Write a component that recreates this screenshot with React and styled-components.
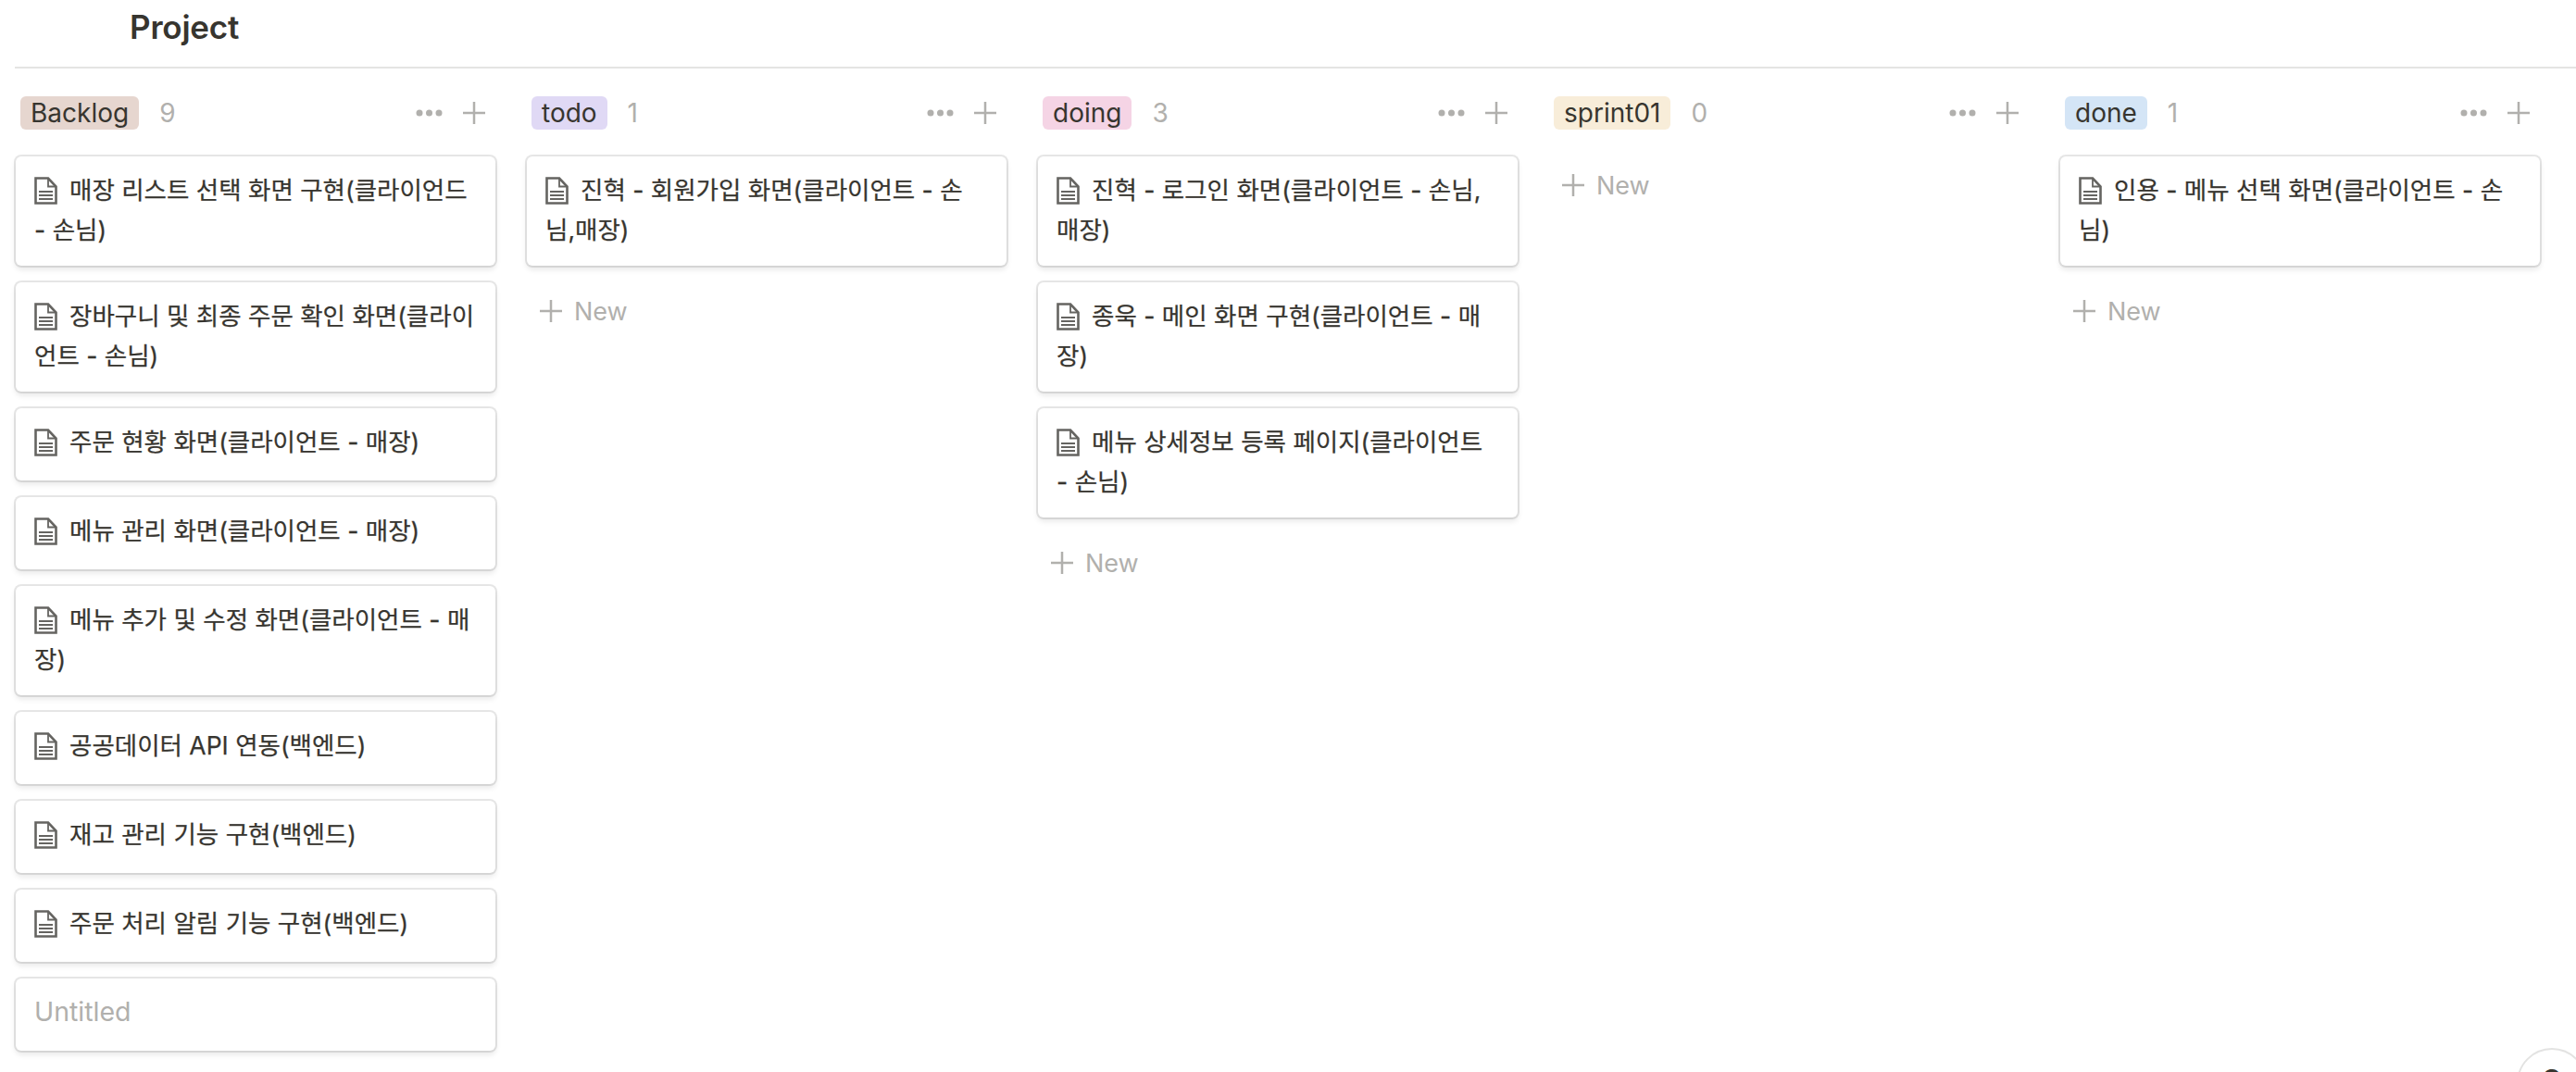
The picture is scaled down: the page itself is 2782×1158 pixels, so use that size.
import React from 'react'
import styled, { createGlobalStyle } from 'styled-components'

const GlobalStyle = createGlobalStyle`
    html, body {
        margin: 0;
        padding: 0;
        height: 100%;
        overflow: hidden;
        background: #fff;
    }
    body {
        font-family: Inter, "Noto Sans CJK KR", sans-serif;
        color: #37352f;
    }
`
const Page = styled.div`
    position: relative;
    width: 2782px;
    height: 1158px;
    overflow: hidden;
    background: #fff;
`
const TopBar = styled.div`
    height: 72px;
    margin-left: 16px;
    padding-left: 124px;
    border-bottom: 2px solid #e4e4e3;
    box-sizing: content-box;
`
const PageTitle = styled.h1`
    margin: 0;
    font-size: 35px;
    line-height: 58px;
    font-weight: 600;
    letter-spacing: -0.2px;
`
const Board = styled.div`
    display: flex;
    gap: 30px;
    padding: 30px 0 0 15px;
`
const Column = styled.div`
    width: 522px;
    flex: none;
    display: flex;
    flex-direction: column;
    gap: 18px;
`
const ColumnHeader = styled.div`
    height: 36px;
    margin-bottom: 11px;
    padding-left: 7px;
    display: flex;
    align-items: center;
    position: relative;
`
const Tag = styled.span`
    height: 36px;
    padding: 0 11px;
    border-radius: 6px;
    background: ${props => props.$color};
    font-size: 28px;
    line-height: 36px;
    white-space: nowrap;
`
const Count = styled.span`
    margin-left: 22px;
    font-size: 28px;
    color: #b1b0ad;
`
const HeaderActions = styled.div`
    margin-left: auto;
    width: 76px;
    margin-right: 12px;
    display: flex;
    justify-content: space-between;
    align-items: center;
`
const Card = styled.div`
    box-sizing: border-box;
    padding: 15px 19px 18px 20px;
    background: #fff;
    border-radius: 6px;
    box-shadow: 0 0 0 2px rgba(15, 15, 15, 0.1), 0 4px 6px rgba(15, 15, 15, 0.1);
    margin: 0 2px;
    font-size: 26.5px;
    line-height: 42.5px;
    font-weight: 400;
    -webkit-text-stroke: 0.25px #37352f;
    min-height: 78px;
`
const EmptyTitle = styled.span`
    color: #b1b0ad;
    font-size: 28.5px;
    -webkit-text-stroke: 0;
`
const DocIcon = styled.svg`
    width: 25px;
    height: 30px;
    vertical-align: -6px;
    margin-right: 13px;
`
const NewRow = styled.div`
    height: 62px;
    padding-left: 15px;
    display: flex;
    align-items: center;
    gap: 12px;
    font-size: 27px;
    color: #b1b0ad;
`

const columns = [
    {
        name: 'Backlog', color: '#e6d6cf', count: 9, untitled: true,
        cards: [
            '매장 리스트 선택 화면 구현(클라이언드 - 손님)',
            '장바구니 및 최종 주문 확인 화면(클라이언트 - 손님)',
            '주문 현황 화면(클라이언트 - 매장)',
            '메뉴 관리 화면(클라이언트 - 매장)',
            '메뉴 추가 및 수정 화면(클라이언트 - 매장)',
            '공공데이터 API 연동(백엔드)',
            '재고 관리 기능 구현(백엔드)',
            '주문 처리 알림 기능 구현(백엔드)',
        ],
    },
    { name: 'todo', color: '#e0d9f5', count: 1, cards: ['진혁 - 회원가입 화면(클라이언트 - 손님,매장)'] },
    {
        name: 'doing', color: '#f5d4e5', count: 3,
        cards: [
            '진혁 - 로그인 화면(클라이언트 - 손님,매장)',
            '종욱 - 메인 화면 구현(클라이언트 - 매장)',
            '메뉴 상세정보 등록 페이지(클라이언트 - 손님)',
        ],
    },
    { name: 'sprint01', color: '#f8edd9', count: 0, cards: [] },
    { name: 'done', color: '#d4e5f6', count: 1, cards: ['인용 - 메뉴 선택 화면(클라이언트 - 손님)'] },
]

function Doc() {
    return (
        <DocIcon viewBox="0 0 25 30" fill="none" stroke="#656461" strokeWidth="2.600">
            <path d="M1.500 1.500h13.500l8.500 9v18h-22z" />
            <path d="M15 2v8.500h8" strokeWidth="1.800" />
            <path d="M5 16h15M5 20h15M5 24h15" strokeWidth="1.800" />
        </DocIcon>
    )
}

function Plus({ color = '#b1b0ad' }) {
    return (
        <svg width="26" height="26" viewBox="0 0 26 26" stroke={color} strokeWidth="2.500">
            <path d="M13 1v24M1 13h24" />
        </svg>
    )
}

function Dots() {
    return (
        <svg width="29" height="8" viewBox="0 0 29 8" fill="#b1b0ad">
            <circle cx="4" cy="4" r="3.500" />
            <circle cx="14.500" cy="4" r="3.500" />
            <circle cx="25" cy="4" r="3.500" />
        </svg>
    )
}

const HelpButton = styled.div`
    position: absolute;
    left: 2718px;
    top: 1132px;
    width: 76px;
    height: 76px;
    box-sizing: border-box;
    border-radius: 50%;
    border: 2px solid #e3e3e2;
    background: #fff;
    text-align: center;
    font-size: 36px;
    line-height: 68px;
    font-weight: 600;
`

function App() {
    return (
        <Page>
            <GlobalStyle />
            <TopBar>
                <PageTitle>Project</PageTitle>
            </TopBar>
            <Board>
                {columns.map((col) => (
                    <Column key={col.name}>
                        <ColumnHeader>
                            <Tag $color={col.color}>{col.name}</Tag>
                            <Count>{col.count}</Count>
                            <HeaderActions>
                                <Dots />
                                <Plus />
                            </HeaderActions>
                        </ColumnHeader>
                        {col.cards.map((title) => (
                            <Card key={title}>
                                <Doc />
                                {title}
                            </Card>
                        ))}
                        {col.untitled ? (
                            <Card>
                                <EmptyTitle>Untitled</EmptyTitle>
                            </Card>
                        ) : (
                            <NewRow>
                                <Plus />
                                New
                            </NewRow>
                        )}
                    </Column>
                ))}
            </Board>
            <HelpButton>?</HelpButton>
        </Page>
    )
}

export default App
